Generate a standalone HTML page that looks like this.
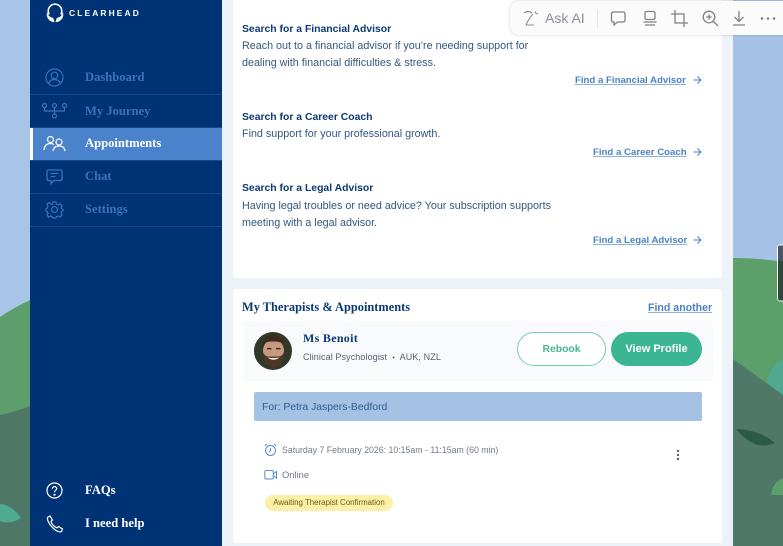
<!DOCTYPE html>
<html><head><meta charset="utf-8">
<style>
html,body{margin:0;padding:0}
body{width:783px;height:546px;overflow:hidden;position:relative;background:#edf2f9;font-family:"Liberation Sans",sans-serif}
.a{position:absolute;white-space:nowrap}
.nav{font:bold 12.600px/14px "Liberation Serif",serif;left:85px;color:#3a72bb}
.ln{position:absolute;left:30px;width:192px;height:1px;background:#13498d}
.h{font-weight:bold;font-size:10.400px;line-height:14px;color:#0d3a72;left:242px}
.p{font-size:10.750px;line-height:14px;color:#33587f;left:242px}
.l{font-weight:bold;font-size:9.650px;line-height:12px;color:#4b82c6;text-decoration:underline;text-decoration-color:#8fb3dc}
svg{position:absolute;overflow:visible}
</style></head><body>
<svg style="left:0;top:0" width="783" height="546" viewBox="0 0 783 546">
<rect x="0" y="0" width="30" height="546" fill="#a8c4e6"/>
<rect x="733" y="0" width="50" height="546" fill="#a5c2e5"/>
<path d="M0 317Q15 307 30 300V546H0Z" fill="#5c9f6c"/>
<path d="M0 415Q15 412 30 406V546H0Z" fill="#4f7868"/>
<path d="M0 504Q12 505 21 518Q10 525 0 521Z" fill="#4fab90"/>
<path d="M733 258Q760 258 783 262V546H733Z" fill="#5b9f6b"/>
<path d="M767 382Q770 364 783 360V398Z" fill="#50a88f"/>
<path d="M733 359L783 395V546H733Z" fill="#4f7868"/>
<path d="M736 429Q760 430 775 443Q755 452 736 429Z" fill="#2b5b48"/>
<path d="M771 495Q773 482 783 478V495Z" fill="#5b9f6b"/>
<rect x="777.500" y="245" width="8" height="16" fill="#4a5264"/>
<rect x="777.500" y="261" width="8" height="40" fill="#2f4a3a"/>
<rect x="777.500" y="245" width="8" height="56" rx="2.500" fill="none" stroke="#fff" stroke-width="1"/>
</svg>

<div class="a" style="left:30px;top:0;width:192px;height:546px;background:#003375"></div>
<div class="a" style="left:30px;top:128px;width:192px;height:32px;background:#4a83cb"></div>
<div class="a" style="left:30px;top:128px;width:2.500px;height:32px;background:#fff"></div>
<div class="ln" style="top:94px"></div><div class="ln" style="top:127px"></div><div class="ln" style="top:160px"></div><div class="ln" style="top:193px"></div><div class="ln" style="top:226px"></div>

<svg style="left:46px;top:3px" width="18" height="20" viewBox="0 0 18 20" fill="none" stroke="#fff"><path d="M3.200 11.500A6.800 6.800 0 1 1 14.800 11.500" stroke-width="1.500"/><path d="M1 9.500Q2.500 14.500 7 15L8.300 19Q2.500 18.500 1 13ZM17 9.500Q15.500 14.500 11 15L9.700 19Q15.500 18.500 17 13Z" fill="#fff" stroke-width=".4"/></svg>
<div class="a" style="left:69px;top:7px;font-size:8.400px;line-height:12px;font-weight:bold;color:#fff;letter-spacing:2.150px">CLEARHEAD</div>

<svg style="left:44px;top:67px" width="22" height="22" viewBox="0 0 22 22" fill="none" stroke="#3a72bb" stroke-width="1.200"><circle cx="10.500" cy="10.500" r="8.500"/><circle cx="10.500" cy="8.500" r="3.300"/><path d="M4.800 16.500C5.500 13.500 8 12.500 10.500 12.500S15.500 13.500 16.200 16.500"/></svg>
<svg style="left:41px;top:102px" width="28" height="18" viewBox="0 0 28 18" fill="none" stroke="#3a72bb" stroke-width="1.200"><circle cx="3.500" cy="3.500" r="2"/><circle cx="13.500" cy="3.500" r="2"/><circle cx="23.500" cy="3.500" r="2"/><circle cx="13.500" cy="14" r="2"/><path d="M3.500 5.500V9H23.500V5.500M13.500 5.500V12"/></svg>
<svg style="left:43px;top:135px" width="24" height="18" viewBox="0 0 24 18" fill="none" stroke="#fff" stroke-width="1.200"><circle cx="7.500" cy="4.500" r="3"/><path d="M1 15C1.500 10.500 4 8.500 7.500 8.500C9 8.500 10 9 11 9.500"/><circle cx="16" cy="7" r="3"/><path d="M10 16C10.500 12.500 13 11 16 11S21.500 12.500 22 16"/></svg>
<svg style="left:46px;top:169px" width="18" height="16" viewBox="0 0 18 16" fill="none" stroke="#3a72bb" stroke-width="1.300"><path d="M2.500 1H14.500Q16 1 16 2.500V10Q16 11.500 14.500 11.500H8L5 14.500V11.500H2.500Q1 11.500 1 10V2.500Q1 1 2.500 1Z"/><path d="M4.500 4.500H12.500M4.500 7.500H9.500"/></svg>
<svg style="left:46px;top:201px" width="18" height="18" viewBox="0 0 18 18" fill="none" stroke="#3a72bb" stroke-width="1.200"><circle cx="8.500" cy="8.500" r="3"/><path d="M7 1H10L10.500 3.200L12.300 4L14.200 2.800L16.200 4.800L15 6.700L15.800 8L17 8.500V10L15.800 10.500L15 12.300L16 14.200L14.200 16L12.300 15L10.500 15.800L10 17H7L6.500 15.800L4.700 15L2.800 16L1 14.200L2 12.300L1.200 10.500L0 10V8L1.200 7L2 5L1 3L3 1.500L4.700 3.200L6.500 3.200Z"/></svg>

<div class="a nav" style="top:70px">Dashboard</div>
<div class="a nav" style="top:103.500px">My Journey</div>
<div class="a nav" style="top:136px;color:#fff">Appointments</div>
<div class="a nav" style="top:169px">Chat</div>
<div class="a nav" style="top:202px">Settings</div>

<svg style="left:46px;top:482px" width="18" height="18" viewBox="0 0 18 18" fill="none" stroke="#fff" stroke-width="1.200"><circle cx="8.500" cy="8.500" r="7.500"/><path d="M6.300 6.800C6.300 5.400 7.300 4.600 8.500 4.600S10.700 5.400 10.700 6.600C10.700 8.300 8.500 8.300 8.500 10.300"/><circle cx="8.500" cy="12.700" r=".5"/></svg>
<svg style="left:46px;top:515px" width="18" height="18" viewBox="0 0 18 18" fill="none" stroke="#fff" stroke-width="1.200"><path d="M1.500 2.500L4 1L6.500 5L5 6.500C5.500 9 8.500 12 11 12.800L12.500 11.500L16.500 14L15.500 16.500C14 17.500 10 16.500 6.500 12.500C3 9 1 5 1.500 2.500Z"/></svg>
<div class="a nav" style="top:483px;color:#fff">FAQs</div>
<div class="a nav" style="top:516px;color:#fff">I need help</div>

<div class="a" style="left:233px;top:0;width:489px;height:278px;background:#fff;border-radius:0 0 3px 3px"></div>
<div class="a" style="left:233px;top:289px;width:489px;height:254px;background:#fff;border-radius:3px"></div>

<div class="a h" style="top:23px">Search for a Financial Advisor</div>
<div class="a p" style="top:39px">Reach out to a financial advisor if you’re needing support for</div>
<div class="a p" style="top:55.500px">dealing with financial difficulties &amp; stress.</div>
<div class="a l" style="left:575px;top:75px">Find a Financial Advisor</div>
<div class="a h" style="top:111px">Search for a Career Coach</div>
<div class="a p" style="top:127px">Find support for your professional growth.</div>
<div class="a l" style="left:593px;top:147px">Find a Career Coach</div>
<div class="a h" style="top:182px">Search for a Legal Advisor</div>
<div class="a p" style="top:199px">Having legal troubles or need advice? Your subscription supports</div>
<div class="a p" style="top:215.500px">meeting with a legal advisor.</div>
<div class="a l" style="left:593px;top:235px">Find a Legal Advisor</div>
<svg style="left:693px;top:75px" width="9" height="10" viewBox="0 0 9 10" fill="none" stroke="#4b82c6" stroke-width="1"><path d="M0.500 5H8M4.500 1.500L8 5L4.500 8.500"/></svg>
<svg style="left:693px;top:147px" width="9" height="10" viewBox="0 0 9 10" fill="none" stroke="#4b82c6" stroke-width="1"><path d="M0.500 5H8M4.500 1.500L8 5L4.500 8.500"/></svg>
<svg style="left:693px;top:235px" width="9" height="10" viewBox="0 0 9 10" fill="none" stroke="#4b82c6" stroke-width="1"><path d="M0.500 5H8M4.500 1.500L8 5L4.500 8.500"/></svg>

<div class="a" style="left:242px;top:300px;font:bold 12.400px/14px 'Liberation Serif',serif;color:#0b3a75">My Therapists &amp; Appointments</div>
<div class="a l" style="left:648px;top:302px;font-size:10.600px">Find another</div>

<div class="a" style="left:243px;top:321px;width:470px;height:60px;background:#f8fafc;border-radius:3px"></div>
<svg style="left:254px;top:332px" width="38" height="38" viewBox="0 0 38 38">
<circle cx="19" cy="19" r="19" fill="#2f3a28"/>
<path d="M8 16Q7 4 19 3Q31 4 30 16L28 14H10Z" fill="#3d2b20"/>
<ellipse cx="19.500" cy="19" rx="10.500" ry="12" fill="#c59a80"/>
<path d="M9 20Q10 35 19.500 35Q29 35 30 20Q28 25 24 24.500H15Q11 25 9 20Z" fill="#4f3526"/>
<path d="M13.500 25.500Q19.500 30 25.500 25.500Q19.500 26.500 13.500 25.500Z" fill="#f0ece6"/>
<path d="M9 13Q12 9 19 9.500Q27 9 30 13L30 9Q25 4 19 4Q12 4 9 9Z" fill="#3d2b20"/>
<rect x="13" y="16" width="4.500" height="1.300" fill="#3a2418"/><rect x="22" y="16" width="4.500" height="1.300" fill="#3a2418"/>
</svg>
<div class="a" style="left:303px;top:331px;font:bold 12px/14px 'Liberation Serif',serif;color:#0b3a75;letter-spacing:.3px">Ms Benoit</div>
<div class="a" style="left:303px;top:349.500px;font-size:9px;line-height:14px;color:#55606e;letter-spacing:.1px">Clinical Psychologist &nbsp;<span style="font-size:7px">•</span>&nbsp; AUK, NZL</div>
<div class="a" style="left:517px;top:332px;width:87px;height:32px;border:1px solid #74cdb3;border-radius:17px;background:#fff;text-align:center;font-weight:bold;font-size:10.400px;line-height:33px;color:#44b694">Rebook</div>
<div class="a" style="left:611px;top:332px;width:91px;height:34px;border-radius:17px;background:#3cb592;text-align:center;font-weight:bold;font-size:11px;line-height:35px;color:#fff">View Profile</div>

<div class="a" style="left:254px;top:392px;width:448px;height:29px;background:#a5c2e5;border-radius:2px"></div>
<div class="a" style="left:262px;top:400.500px;font-size:10.400px;line-height:14px;color:#33598f">For: Petra Jaspers-Bedford</div>

<svg style="left:264px;top:443px" width="14" height="14" viewBox="0 0 14 14" fill="none" stroke="#5a8dcc" stroke-width="1"><circle cx="6.500" cy="7.500" r="5"/><path d="M6.500 5V7.500L4.800 9.200M1 2.800L3 1M12 2.800L10 1"/></svg>
<div class="a" style="left:282px;top:443px;font-size:8.750px;line-height:14px;color:#727b85">Saturday 7 February 2026: 10:15am - 11:15am (60 min)</div>
<svg style="left:264px;top:469px" width="14" height="12" viewBox="0 0 14 12" fill="none" stroke="#5a8dcc" stroke-width="1"><rect x=".8" y="1.500" width="8.500" height="8.500" rx="1.500"/><path d="M9.300 5L12.500 2.500V9L9.300 6.500"/></svg>
<div class="a" style="left:282px;top:468px;font-size:9.400px;line-height:14px;color:#727b85">Online</div>
<div class="a" style="left:265px;top:495px;width:128px;height:16px;border-radius:8px;background:#fbf0a6;text-align:center;font-size:7.900px;line-height:16px;color:#6d5a1c">Awaiting Therapist Confirmation</div>
<svg style="left:675px;top:449px" width="6" height="13" viewBox="0 0 6 13" fill="#555e69"><circle cx="3" cy="2" r="1.200"/><circle cx="3" cy="6" r="1.200"/><circle cx="3" cy="10" r="1.200"/></svg>

<div class="a" style="left:510px;top:1px;width:283px;height:34px;border-radius:9px;background:#fbfbfc;box-shadow:0 0 3px rgba(0,0,0,.18)"></div>
<svg style="left:523px;top:9px" width="17" height="18" viewBox="0 0 17 18" fill="none" stroke="#8a8f96" stroke-width="1.100"><path d="M1 4Q5 1 9 4M3 16Q6 9 10 5M3 16H11M12 2.500L13 4.500L15 5"/></svg>
<div class="a" style="left:545px;top:10px;font-size:14px;line-height:17px;color:#8b9096">Ask AI</div>
<div class="a" style="left:597px;top:9px;width:1px;height:19px;background:#e3e4e7"></div>
<svg style="left:610px;top:10px" width="17" height="17" viewBox="0 0 17 17" fill="none" stroke="#7c8187" stroke-width="1.300"><path d="M3 2H13Q15 2 15 4V10Q15 12 13 12H7.500L4 15V12H3Q1.500 12 1.500 10V4Q1.500 2 3 2Z"/></svg>
<svg style="left:642px;top:10px" width="16" height="17" viewBox="0 0 16 17" fill="none" stroke="#7c8187" stroke-width="1.300"><rect x="3" y="1.500" width="10" height="8" rx="1.500"/><path d="M1.500 12H14.500M3 15H13"/></svg>
<svg style="left:671px;top:10px" width="17" height="17" viewBox="0 0 17 17" fill="none" stroke="#7c8187" stroke-width="1.300"><path d="M4 0V13H17M0 4H13V17"/></svg>
<svg style="left:702px;top:10px" width="17" height="17" viewBox="0 0 17 17" fill="none" stroke="#7c8187" stroke-width="1.300"><circle cx="7" cy="7" r="5.800"/><path d="M11.500 11.500L16 16M4.300 7H9.700M7 4.300V9.700"/></svg>
<svg style="left:732px;top:11px" width="14" height="15" viewBox="0 0 14 15" fill="none" stroke="#7c8187" stroke-width="1.300"><path d="M7 0V10M2.500 6L7 10.500L11.500 6M1 14H13"/></svg>
<svg style="left:760px;top:16px" width="16" height="5" viewBox="0 0 16 5" fill="#7c8187"><circle cx="2" cy="2.500" r="1.300"/><circle cx="8" cy="2.500" r="1.300"/><circle cx="14" cy="2.500" r="1.300"/></svg>
</body></html>
